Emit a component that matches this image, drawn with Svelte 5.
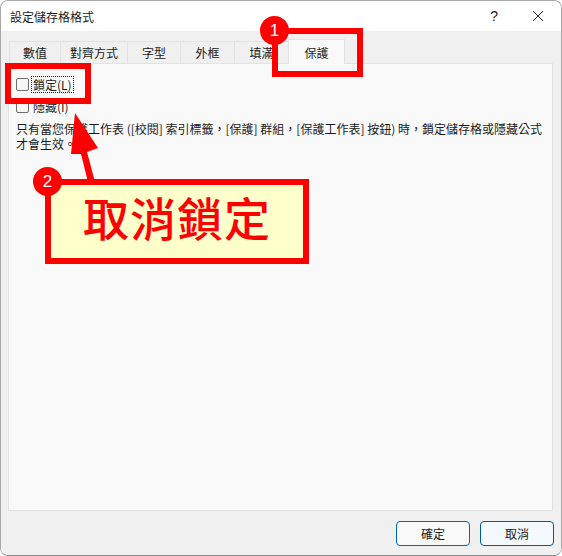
<script>
  const tabs = ['數值', '對齊方式', '字型', '外框', '填滿', '保護'];
  const active = 5;
</script>

<div class="window">
  <header class="titlebar">
    <span class="title">設定儲存格格式</span>
    <span class="help">?</span>
    <svg class="close" width="12" height="12" viewBox="0 0 12 12">
      <path d="M1 1 L11 11 M11 1 L1 11" stroke="#222" stroke-width="1" fill="none" />
    </svg>
  </header>

  <div class="body">
    <nav class="tabs">
      {#each tabs as tab, i}
        <div class="tab tab{i}" class:active={i === active}>{tab}</div>
      {/each}
    </nav>

    <section class="panel">
      <label class="check first">
        <span class="box"></span>
        <span class="focus">鎖定(L)</span>
      </label>
      <label class="check second">
        <span class="box"></span>
        <span class="plain">隱藏(I)</span>
      </label>
      <p class="note">只有當您保護工作表 ([校閱] 索引標籤，[保護] 群組，[保護工作表] 按鈕) 時，鎖定儲存格或隱藏公式<br />才會生效。</p>
    </section>

    <footer class="buttons">
      <button class="btn">確定</button>
      <button class="btn cancel">取消</button>
    </footer>
  </div>

  <!-- red annotations drawn over the dialog -->
  <div class="mark tab-mark"></div>
  <div class="mark lock-mark"></div>
  <svg class="arrow" width="120" height="90" viewBox="0 0 120 90">
    <path d="M24 1 L47 36 L36 40 L44 70 L37 70 L30 42 L20 42 Z" fill="#ff0000" />
  </svg>
  <div class="callout">取消鎖定</div>
  <div class="badge one">1</div>
  <div class="badge two">2</div>
</div>

<style>
  :global(body) {
    margin: 0;
    background: #fff;
  }

  .window {
    position: relative;
    width: 562px;
    height: 556px;
    box-sizing: border-box;
    border: 1px solid #a9a9a9;
    border-bottom-color: #8a8a8a;
    border-radius: 8px;
    overflow: hidden;
    display: flex;
    flex-direction: column;
    font-family: "Noto Sans CJK TC", "Noto Sans", sans-serif;
    font-size: 12px;
    color: #1a1a1a;
  }

  .titlebar {
    height: 30px;
    flex: none;
    background: #fff;
    display: flex;
    align-items: center;
    padding: 0 17px 0 9px;
  }

  .title {
    flex: 1;
  }

  .help {
    font-family: "Liberation Sans", sans-serif;
    font-size: 14px;
    margin-right: 34px;
  }

  .body {
    flex: 1;
    background: #f0f0f0;
    display: flex;
    flex-direction: column;
    padding: 0 8px 0 7px;
    min-height: 0;
  }

  .tabs {
    height: 32px;
    flex: none;
    display: flex;
    align-items: flex-end;
    padding-left: 1px;
  }

  .tab {
    height: 22px;
    box-sizing: border-box;
    display: flex;
    align-items: center;
    justify-content: center;
    border: 1px solid #e3e3e3;
    border-bottom: none;
    margin-right: -1px;
    background: #f0f0f0;
    position: relative;
  }

  .tab0 { width: 52px; }
  .tab1 { width: 68px; }
  .tab2 { width: 54px; }
  .tab3 { width: 55px; }
  .tab4 { width: 55px; }
  .tab5 { width: 57px; }

  .tab.active {
    background: #f9f9f9;
    z-index: 1;
    margin-bottom: -1px;
    height: 25px;
  }

  .panel {
    height: 448px;
    flex: none;
    box-sizing: border-box;
    background: #f9f9f9;
    border: 1px solid #e3e3e3;
    padding: 11px 0 0 7px;
  }

  .check {
    display: flex;
    align-items: center;
    gap: 2px;
    height: 18px;
  }

  .second {
    margin-top: 4px;
  }

  .box {
    width: 13px;
    height: 13px;
    box-sizing: border-box;
    border: 1px solid #6e6e6e;
    border-radius: 2px;
    background: #f6f6f6;
  }

  .focus {
    border: 1px dotted #222;
    padding: 0 1px;
    line-height: 15px;
  }

  .plain {
    padding: 0 2px;
  }

  .note {
    margin: 6px 0 0;
    line-height: 15px;
    white-space: nowrap;
  }

  .buttons {
    flex: 1;
    display: flex;
    justify-content: flex-end;
    align-items: flex-start;
    gap: 10px;
    padding-top: 10px;
    margin-right: -1px;
  }

  .btn {
    width: 74px;
    height: 25px;
    box-sizing: border-box;
    border: 1px solid #0067c0;
    border-radius: 4px;
    background: #f9f9f9;
    font: inherit;
    color: inherit;
    padding: 0;
  }

  .cancel {
    background: #f4f9fd;
    border-color: #005a9e;
  }

  .mark {
    position: absolute;
    box-sizing: border-box;
    border: 6px solid #ff0000;
  }

  .tab-mark {
    left: 271px;
    top: 27px;
    width: 91px;
    height: 49px;
  }

  .lock-mark {
    left: 4px;
    top: 62px;
    width: 86px;
    height: 41px;
  }

  .arrow {
    position: absolute;
    left: 50px;
    top: 111px;
  }

  .callout {
    position: absolute;
    left: 44px;
    top: 178px;
    width: 264px;
    height: 85px;
    box-sizing: border-box;
    border: 6px solid #ff0000;
    background: #ffffcc;
    color: #ff0000;
    font-size: 46px;
    font-weight: 500;
    line-height: 63px;
    text-align: center;
    letter-spacing: 1px;
  }

  .badge {
    position: absolute;
    width: 29px;
    height: 29px;
    border-radius: 50%;
    background: #ff0000;
    color: #fff;
    font-family: "Liberation Sans", sans-serif;
    font-size: 17px;
    display: flex;
    align-items: center;
    justify-content: center;
  }

  .one {
    left: 259px;
    top: 15px;
  }

  .two {
    left: 32px;
    top: 166px;
  }
</style>
